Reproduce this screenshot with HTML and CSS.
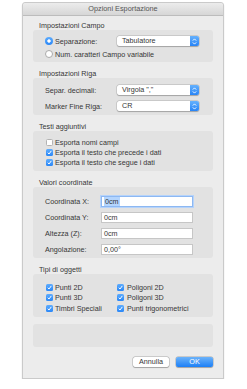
FILE: index.html
```html
<!DOCTYPE html>
<html lang="it">
<head>
    <meta charset="UTF-8" />
    <title>Opzioni Esportazione</title>
    <link rel="stylesheet" href="styles.css">
</head>
<body>
    <div class="window">
        <div class="titlebar">Opzioni Esportazione</div>
        <div class="content">

            <!-- Impostazioni Campo -->
            <div class="section-label">Impostazioni Campo</div>
            <div class="group group-campo">
                <div class="row">
                    <label class="field-label"><span class="radio on"></span>Separazione:</label>
                    <div class="popup">
                        <span class="popup-text">Tabulatore</span>
                        <span class="popup-arrow"><svg width="5" height="7" viewBox="0 0 5 7"><path d="M0.8 2.6 2.5 0.9 4.2 2.6M0.8 4.4 2.5 6.1 4.2 4.4" fill="none" stroke="#fff" stroke-width="0.9"/></svg></span>
                    </div>
                </div>
                <div class="row">
                    <label class="field-label wide"><span class="radio"></span>Num. caratteri Campo variabile</label>
                </div>
            </div>

            <!-- Impostazioni Riga -->
            <div class="section-label">Impostazioni Riga</div>
            <div class="group group-riga">
                <div class="row">
                    <span class="field-label">Separ. decimali:</span>
                    <div class="popup">
                        <span class="popup-text">Virgola ","</span>
                        <span class="popup-arrow"><svg width="5" height="7" viewBox="0 0 5 7"><path d="M0.8 2.6 2.5 0.9 4.2 2.6M0.8 4.4 2.5 6.1 4.2 4.4" fill="none" stroke="#fff" stroke-width="0.9"/></svg></span>
                    </div>
                </div>
                <div class="row">
                    <span class="field-label">Marker Fine Riga:</span>
                    <div class="popup">
                        <span class="popup-text">CR</span>
                        <span class="popup-arrow"><svg width="5" height="7" viewBox="0 0 5 7"><path d="M0.8 2.6 2.5 0.9 4.2 2.6M0.8 4.4 2.5 6.1 4.2 4.4" fill="none" stroke="#fff" stroke-width="0.9"/></svg></span>
                    </div>
                </div>
            </div>

            <!-- Testi aggiuntivi -->
            <div class="section-label">Testi aggiuntivi</div>
            <div class="group group-testi">
                <label class="check-line"><span class="check"></span>Esporta nomi campi</label>
                <label class="check-line"><span class="check on"><svg width="7" height="7" viewBox="0 0 7 7"><path d="M1.8 3.7 3 5 5.3 1.9" fill="none" stroke="#fff" stroke-width="1"/></svg></span>Esporta il testo che precede i dati</label>
                <label class="check-line"><span class="check on"><svg width="7" height="7" viewBox="0 0 7 7"><path d="M1.8 3.7 3 5 5.3 1.9" fill="none" stroke="#fff" stroke-width="1"/></svg></span>Esporta il testo che segue i dati</label>
            </div>

            <!-- Valori coordinate -->
            <div class="section-label">Valori coordinate</div>
            <div class="group group-coord">
                <div class="row">
                    <span class="coord-label">Coordinata X:</span>
                    <div class="textfield focused"><span class="selected">0cm</span></div>
                </div>
                <div class="row">
                    <span class="coord-label">Coordinata Y:</span>
                    <div class="textfield">0cm</div>
                </div>
                <div class="row">
                    <span class="coord-label">Altezza (Z):</span>
                    <div class="textfield">0cm</div>
                </div>
                <div class="row">
                    <span class="coord-label">Angolazione:</span>
                    <div class="textfield">0,00°</div>
                </div>
            </div>

            <!-- Tipi di oggetti -->
            <div class="section-label">Tipi di oggetti</div>
            <div class="group group-tipi">
                <label class="check-line"><span class="check on"><svg width="7" height="7" viewBox="0 0 7 7"><path d="M1.8 3.7 3 5 5.3 1.9" fill="none" stroke="#fff" stroke-width="1"/></svg></span>Punti 2D</label>
                <label class="check-line"><span class="check on"><svg width="7" height="7" viewBox="0 0 7 7"><path d="M1.8 3.7 3 5 5.3 1.9" fill="none" stroke="#fff" stroke-width="1"/></svg></span>Poligoni 2D</label>
                <label class="check-line"><span class="check on"><svg width="7" height="7" viewBox="0 0 7 7"><path d="M1.8 3.7 3 5 5.3 1.9" fill="none" stroke="#fff" stroke-width="1"/></svg></span>Punti 3D</label>
                <label class="check-line"><span class="check on"><svg width="7" height="7" viewBox="0 0 7 7"><path d="M1.8 3.7 3 5 5.3 1.9" fill="none" stroke="#fff" stroke-width="1"/></svg></span>Poligoni 3D</label>
                <label class="check-line"><span class="check on"><svg width="7" height="7" viewBox="0 0 7 7"><path d="M1.8 3.7 3 5 5.3 1.9" fill="none" stroke="#fff" stroke-width="1"/></svg></span>Timbri Speciali</label>
                <label class="check-line"><span class="check on"><svg width="7" height="7" viewBox="0 0 7 7"><path d="M1.8 3.7 3 5 5.3 1.9" fill="none" stroke="#fff" stroke-width="1"/></svg></span>Punti trigonometrici</label>
            </div>

            <div class="group group-empty"></div>

            <div class="buttons">
                <button class="btn">Annulla</button>
                <button class="btn primary">OK</button>
            </div>
        </div>
    </div>
</body>
</html>
```

FILE: styles.css
```css
* {
    margin: 0;
    padding: 0;
    box-sizing: border-box;
}

body {
    background: #ffffff;
    font-family: 'Liberation Sans', Arial, sans-serif;
    font-size: 7.2px;
    color: #363636;
}

/* Window frame */
.window {
    width: 202px;
    margin: 2px 0 0 22px;
    background: #ececec;
    border: 1px solid #cacaca;
    border-radius: 3px 3px 0 0;
    box-shadow: 0 2px 1px rgba(0, 0, 0, 0.3);
}

.titlebar {
    height: 13px;
    line-height: 12px;
    text-align: center;
    color: #555555;
    font-size: 7.3px;
    background: linear-gradient(#ececec, #d6d6d6);
    border-bottom: 1px solid #bcbcbc;
    border-radius: 3px 3px 0 0;
}

.content {
    padding: 5px 10px 11px;
}

/* Sections */
.section-label {
    height: 9px;
    line-height: 9px;
    padding-left: 6px;
    margin-top: 7px;
}

.section-label:first-child {
    margin-top: 0;
}

.group {
    background: #e2e2e2;
    border-radius: 3px;
    display: flex;
    flex-direction: column;
}

.row {
    display: flex;
    align-items: center;
}

.field-label {
    width: 72px;
    display: flex;
    align-items: center;
    white-space: nowrap;
}

.field-label.wide {
    width: auto;
}

/* Impostazioni Campo */
.group-campo {
    padding: 5px 0 2px 12px;
    gap: 1px;
}

.group-campo .row {
    height: 12px;
}

/* Impostazioni Riga */
.group-riga {
    padding: 7px 0 4px 12px;
    gap: 6px;
}

.group-riga .row {
    height: 10px;
}

/* Testi aggiuntivi */
.group-testi {
    padding: 6px 0 4px 13px;
}

.check-line {
    height: 10px;
    display: flex;
    align-items: center;
    white-space: nowrap;
}

/* Valori coordinate */
.group-coord {
    padding: 9px 0 3px 12px;
    gap: 5px;
}

.group-coord .row {
    height: 11px;
}

.coord-label {
    width: 56px;
}

/* Tipi di oggetti */
.group-tipi {
    display: grid;
    grid-template-columns: 71px 1fr;
    grid-auto-rows: 10.5px;
    padding: 8px 0 3.5px 13px;
}

.group-tipi .check-line {
    height: 10.5px;
}

.group-empty {
    margin-top: 7px;
    height: 23px;
}

/* Controls */
.radio {
    width: 8px;
    height: 8px;
    margin-right: 2px;
    border-radius: 50%;
    background: #ffffff;
    border: 1px solid #aaaaaa;
    flex-shrink: 0;
}

.radio.on {
    border: none;
    background: radial-gradient(circle, #ffffff 0 1.4px, transparent 1.9px),
                linear-gradient(#5eacfd, #2a87f7);
}

.check {
    width: 7px;
    height: 7px;
    margin-right: 2px;
    border-radius: 1.5px;
    background: #ffffff;
    border: 1px solid #b3b3b3;
    flex-shrink: 0;
    display: flex;
}

.check.on {
    border: none;
    background: linear-gradient(#5eacfd, #2a87f7);
}

.group-tipi .check-line:nth-child(even) .check {
    margin-right: 3px;
}

.popup {
    width: 82px;
    height: 10px;
    display: flex;
    background: #ffffff;
    border-radius: 2px;
    box-shadow: 0 0 0 0.5px rgba(0, 0, 0, 0.18), 0 0.5px 1px rgba(0, 0, 0, 0.2);
    overflow: hidden;
}

.popup-text {
    flex: 1;
    padding-left: 5px;
    line-height: 10px;
}

.popup-arrow {
    width: 9px;
    display: flex;
    align-items: center;
    justify-content: center;
    background: linear-gradient(#65b1fd, #2784f6);
}

.textfield {
    width: 92px;
    height: 11px;
    line-height: 9px;
    padding-left: 2px;
    background: #ffffff;
    border: 1px solid #c6c6c6;
}

.textfield.focused {
    border-color: #8db8f2;
    box-shadow: 0 0 0 1px #b5d3fb;
}

.selected {
    background: #b4d5fe;
    padding: 0 1px;
}

/* Buttons */
.buttons {
    margin-top: 10px;
    display: flex;
    justify-content: flex-end;
    gap: 7px;
}

.btn {
    height: 10px;
    width: 36px;
    font-family: inherit;
    font-size: 7.2px;
    line-height: 10px;
    color: #363636;
    background: #ffffff;
    border: none;
    border-radius: 2px;
    box-shadow: 0 0 0 0.5px rgba(0, 0, 0, 0.25), 0 0.5px 1px rgba(0, 0, 0, 0.2);
}

.btn.primary {
    width: 37px;
    color: #ffffff;
    background: linear-gradient(#6cb3fa, #1c7ff6);
}
```
